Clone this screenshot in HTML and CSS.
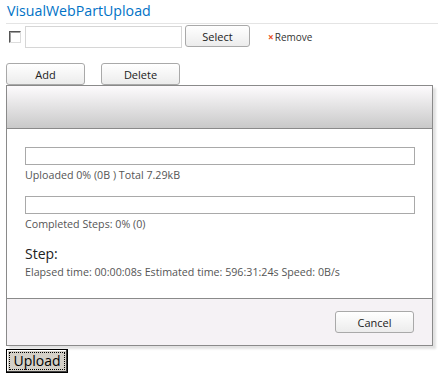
FILE: index.html
```html
<!DOCTYPE html>
<html lang="en">

<head>
  <meta charset="UTF-8">
  <meta name="viewport" content="width=device-width, initial-scale=1.0">
  <title>VisualWebPartUpload</title>
  <link rel="stylesheet" href="styles.css">
</head>

<body>
  <main class="webpart">
    <h2 class="webpart-title">VisualWebPartUpload</h2>

    <div class="file-row">
      <span class="check"></span>
      <input type="text" class="file-input">
      <button class="btn btn-select">Select</button>
      <a href="#" class="remove"><span class="remove-x">&times;</span>Remove</a>
    </div>

    <div class="actions">
      <button class="btn btn-wide">Add</button>
      <button class="btn btn-wide">Delete</button>
    </div>

    <section class="dialog">
      <header class="dialog-head"></header>

      <div class="dialog-body">
        <div class="bar"></div>
        <p class="bar-label">Uploaded 0% (0B ) Total 7.29kB</p>

        <div class="bar"></div>
        <p class="bar-label">Completed Steps: 0% (0)</p>

        <h3 class="step-title">Step:</h3>
        <p class="step-info">Elapsed time: 00:00:08s Estimated time: 596:31:24s Speed: 0B/s</p>
      </div>

      <footer class="dialog-foot">
        <button class="btn btn-wide">Cancel</button>
      </footer>
    </section>

    <button class="upload"><span class="upload-focus">Upload</span></button>
  </main>
</body>

</html>
```

FILE: styles.css
```css
*,
*::before,
*::after {
  box-sizing: border-box;
}

body,
h2,
h3,
p {
  margin: 0;
  padding: 0;
}

:root {
  /* COLORS */
  --title-blue: #0072c6;
  --text: #444444;
  --border: #8a8a8a;
  --line: #e4e4e4;
  --foot-bg: #f5f2f5;

  /* FONT */
  --ff-ui: "Open Sans", "Liberation Sans", sans-serif;
}

body {
  font-family: var(--ff-ui);
  font-size: 10.7px;
  color: var(--text);
  background-color: #ffffff;
}

.webpart {
  padding-inline-start: 6px;
  width: 438px;
}

.webpart-title {
  height: 24px;
  padding-inline-start: 1px;
  padding-block-start: 1px;

  border-bottom: 1px solid var(--line);

  font-size: 14.2px;
  font-weight: 400;
  line-height: 20px;
  color: var(--title-blue);
}

.file-row {
  display: flex;
  align-items: center;

  height: 23px;
  margin-block-start: 1px;
}

.check {
  width: 12px;
  height: 12px;
  margin-inline-start: 3px;
  margin-inline-end: 4px;

  border-style: solid;
  border-width: 1px;
  border-color: #555555 #dcdcdc #dcdcdc #555555;
  background-color: #ffffff;
  box-shadow: inset 1px 1px 0 #a0a0a0;
}

.file-input {
  width: 157px;
  height: 22px;
  margin: 0;
  padding: 0 3px;

  border: 1px solid #d6d6d6;
  font: inherit;
}

.btn {
  height: 22px;
  padding: 0;

  border: 1px solid #a9a9a9;
  border-radius: 3px;

  font-family: var(--ff-ui);
  font-size: 11px;
  color: #222222;
  background: linear-gradient(#ffffff, #ececec);
}

.btn-select {
  width: 65px;
  margin-inline-start: 3px;
  margin-block-start: -1px;
}

.btn-wide {
  width: 79px;
}

.remove {
  margin-inline-start: 18px;

  font-size: 10px;
  text-decoration: none;
  color: #333333;
}

.remove-x {
  margin-inline-end: 1px;

  font-weight: 700;
  color: #e8501a;
}

.actions {
  display: flex;
  gap: 16px;

  margin-block-start: 15px;
}

.dialog {
  width: 427px;

  border: 1px solid var(--border);
  box-shadow: 3px 3px 2px #e2e2e2;
}

.dialog-head {
  height: 43px;

  border-bottom: 1px solid var(--border);
  background: linear-gradient(#fdfbfd, #c9c9c9);
}

.dialog-body {
  padding: 18px 17px 19px 18px;
}

.bar {
  height: 18px;

  border: 1px solid #a9a9a9;
}

.bar-label {
  margin-block: 4px 14px;

  line-height: 13px;
  color: #555555;
}

.step-title {
  margin-block-start: 14px;

  font-size: 14px;
  font-weight: 400;
  line-height: 18px;
  color: #222222;
}

.step-info {
  margin-block-start: 2px;

  line-height: 14px;
  color: #555555;
}

.dialog-foot {
  display: flex;
  align-items: center;
  justify-content: flex-end;

  height: 47px;
  padding-inline-end: 18px;

  border-top: 1px solid var(--border);
  background-color: var(--foot-bg);
}

.upload {
  width: 62px;
  height: 24px;
  margin-block-start: 3px;
  padding: 2px;

  border: 1px solid #000000;
  border-radius: 0;

  font-family: var(--ff-ui);
  font-size: 14px;
  color: #000000;
  background-color: #d4d0c8;
  box-shadow: inset -1px -1px 0 #404040, inset 1px 1px 0 #ffffff;
}

.upload-focus {
  display: block;
  height: 100%;

  border: 1px dotted #000000;
  line-height: 16px;
}
```
